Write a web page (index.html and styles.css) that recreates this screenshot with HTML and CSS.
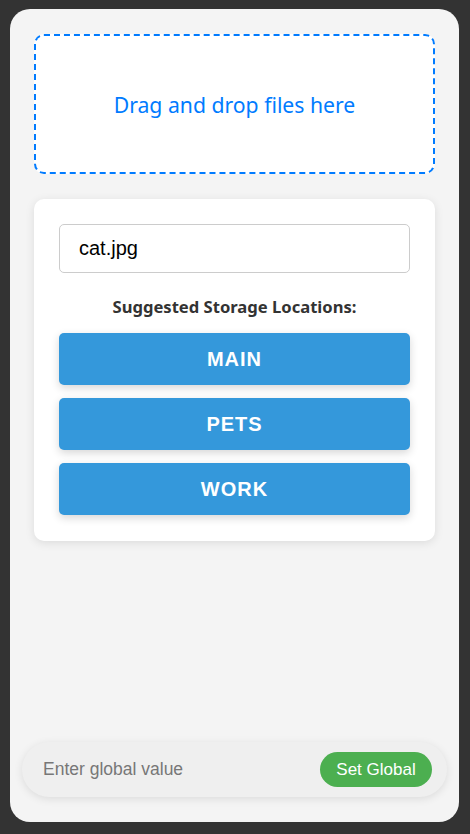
FILE: index.html
```html
<!DOCTYPE html>
<html lang="en">
<head>
<meta charset="utf-8">
<title>Storage</title>
<link rel="stylesheet" href="styles.css">
</head>
<body>
<div class="app">
  <div class="dropzone">Drag and drop files here</div>
  <div class="card">
    <input class="filename" type="text" value="cat.jpg">
    <div class="label">Suggested Storage Locations:</div>
    <div class="locations">
      <button class="loc">MAIN</button>
      <button class="loc">PETS</button>
      <button class="loc">WORK</button>
    </div>
  </div>
  <div class="globalbar">
    <input class="globalinput" type="text" placeholder="Enter global value">
    <button class="setglobal">Set Global</button>
  </div>
</div>
</body>
</html>
```
FILE: styles.css
```css
html, body {
  margin: 0;
  padding: 0;
  background: #333333;
  height: 834px;
}
body {
  padding: 9px 11px 12px 10px;
  box-sizing: border-box;
}
.app {
  height: 813px;
  box-sizing: border-box;
  background: #f4f4f4;
  border-radius: 20px;
  padding: 25px 24px 25px 24px;
  display: flex;
  flex-direction: column;
  font-family: "Liberation Sans", Arial, sans-serif;
}
.dropzone {
  height: 140px;
  box-sizing: border-box;
  border: 2px dashed #007bff;
  border-radius: 10px;
  background: #ffffff;
  display: flex;
  align-items: center;
  justify-content: center;
  color: #007bff;
  font-family: "Noto Sans", sans-serif;
  font-size: 21.2px;
}
.card {
  margin-top: 25px;
  background: #ffffff;
  border-radius: 10px;
  box-shadow: 0 2px 10px rgba(0,0,0,0.1);
  padding: 25px 25px 26px 25px;
  display: flex;
  flex-direction: column;
}
.filename {
  height: 49px;
  box-sizing: border-box;
  border: 1px solid #cccccc;
  border-radius: 5px;
  padding: 0 19px;
  font-family: "Liberation Sans", Arial, sans-serif;
  font-size: 20px;
  color: #000;
  outline: none;
}
.label {
  margin-top: 22px;
  margin-bottom: 14px;
  line-height: 24px;
  text-align: center;
  font-family: "Noto Sans", sans-serif;
  font-weight: bold;
  font-size: 16.6px;
  color: #333333;
}
.locations {
  display: flex;
  flex-direction: column;
  gap: 13px;
}
.loc {
  height: 52px;
  border: none;
  border-radius: 5px;
  background: #3498db;
  color: #ffffff;
  font-family: "Liberation Sans", Arial, sans-serif;
  font-weight: bold;
  font-size: 20px;
  letter-spacing: 1px;
  box-shadow: 0 3px 8px rgba(0,0,0,0.16);
  padding: 0;
}
.globalbar {
  margin-top: auto;
  margin-left: -12px;
  margin-right: -12px;
  height: 55px;
  box-sizing: border-box;
  border-radius: 28px;
  background: #efefef;
  box-shadow: 0 2px 8px rgba(0,0,0,0.1);
  display: flex;
  align-items: center;
  padding: 0 15px 0 21px;
}
.globalinput {
  flex: 1;
  border: none;
  background: transparent;
  outline: none;
  font-family: "Liberation Sans", Arial, sans-serif;
  font-size: 17.5px;
  padding: 0;
  color: #333;
}
.globalinput::placeholder {
  color: #777777;
}
.setglobal {
  height: 35px;
  width: 112px;
  border: none;
  border-radius: 18px;
  background: #4caf50;
  color: #ffffff;
  font-family: "Liberation Sans", Arial, sans-serif;
  font-size: 17px;
  padding: 0;
}
```
